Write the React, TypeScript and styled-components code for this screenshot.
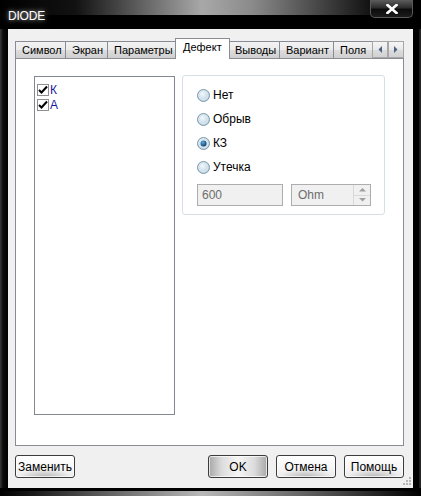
import React from 'react';
import styled, { createGlobalStyle } from 'styled-components';

const GlobalStyle = createGlobalStyle`
  html, body {
    margin: 0;
    padding: 0;
    background: #000;
  }
  body {
    font-family: 'Liberation Sans', Arial, sans-serif;
    font-size: 11px;
    color: #000;
  }
`;

const Window = styled.div`
  width: 421px;
  height: 496px;
  display: flex;
  flex-direction: column;
  background-color: #000;
  background-image: linear-gradient(to right, #000000 0%, #121212 18%, #5e5e5e 33%, #a8a8a8 48%, #8a8a8a 60%, #454545 76%, #121212 88%, #000000 95%);
  background-size: 100% 15px;
  background-repeat: no-repeat;
  background-position: 0 0;
  overflow: hidden;
`;

const TitleBar = styled.div`
  height: 29px;
  flex-shrink: 0;
  display: flex;
  align-items: flex-start;
  justify-content: space-between;
`;

const Title = styled.div`
  margin: 9px 0 0 8px;
  font-size: 12px;
  color: #fff;
  letter-spacing: -0.2px;
  text-shadow: 0 0 4px rgba(255, 255, 255, 0.6), 0 0 8px rgba(255, 255, 255, 0.35);
`;

const CloseButton = styled.div`
  width: 43px;
  height: 18px;
  flex-shrink: 0;
  margin-right: 8px;
  box-sizing: border-box;
  border: 1px solid #5a5a5a;
  border-top: none;
  border-radius: 0 0 5px 5px;
  background: linear-gradient(to bottom, #5d5d5d 0%, #2c2c2c 45%, #0c0c0c 55%, #1c1c1c 100%);
  display: flex;
  align-items: center;
  justify-content: center;
`;

const Body = styled.div`
  flex: 1;
  display: flex;
`;

const SideFrame = styled.div<{ $right?: boolean }>`
  width: 8px;
  flex-shrink: 0;
  background: ${p =>
    p.$right
      ? 'linear-gradient(to right, #000 0%, #000 75%, #3a3a3a 88%, #111 100%)'
      : 'linear-gradient(to right, #3a3a3a 0%, #1a1a1a 25%, #0a0a0a 40%, #000 100%)'};
`;

const Client = styled.div`
  flex: 1;
  background: #f0f0f0;
  display: flex;
  flex-direction: column;
  padding: 9px 9px 0 7px;
  position: relative;
`;

const TabStrip = styled.div`
  height: 21px;
  display: flex;
  align-items: flex-end;
  position: relative;
  z-index: 1;
`;

const TabsViewport = styled.div`
  width: 357px;
  display: flex;
  align-items: flex-end;
  overflow: hidden;
  height: 21px;
`;

const Tab = styled.div<{ $w: number; $active?: boolean }>`
  flex-shrink: 0;
  width: ${p => p.$w}px;
  box-sizing: border-box;
  height: ${p => (p.$active ? 22 : 18)}px;
  margin-bottom: ${p => (p.$active ? -1 : 0)}px;
  margin-left: ${p => (p.$active ? -1 : 0)}px;
  margin-right: ${p => (p.$active ? -1 : 0)}px;
  border: 1px solid #898c95;
  border-bottom: ${p => (p.$active ? 'none' : '1px solid #898c95')};
  border-left-width: ${p => (p.$active ? 1 : 0)}px;
  background: ${p =>
    p.$active ? '#fff' : 'linear-gradient(to bottom, #f2f2f2 0%, #ebebeb 50%, #dddddd 51%, #cfcfcf 100%)'};
  padding: ${p => (p.$active ? '2px 0 0 7px' : '2px 0 0 6px')};
  white-space: nowrap;
  line-height: 13px;
  z-index: ${p => (p.$active ? 2 : 1)};

  &:first-child {
    border-left-width: 1px;
  }
`;

const ScrollPair = styled.div`
  display: flex;
  margin-bottom: 1px;
`;

const ScrollButton = styled.div`
  width: 16px;
  height: 17px;
  box-sizing: border-box;
  border: 1px solid #a7a7a7;
  background: linear-gradient(to bottom, #f6f6f6 0%, #e9e9e9 50%, #dcdcdc 51%, #d2d2d2 100%);
  display: flex;
  align-items: center;
  justify-content: center;
`;

const Panel = styled.div`
  height: 388px;
  box-sizing: border-box;
  border: 1px solid #898c95;
  background: #fff;
  margin-top: -1px;
  display: flex;
  align-items: flex-start;
  padding: 17px 0 0 18px;
  gap: 7px;
`;

const ListBox = styled.div`
  width: 141px;
  height: 339px;
  box-sizing: border-box;
  border: 1px solid #828790;
  padding: 5px 0 0 2px;
`;

const ListItem = styled.div`
  height: 15px;
  display: flex;
  align-items: center;
  gap: 1px;
`;

const CheckBox = styled.div`
  width: 12px;
  height: 12px;
  box-sizing: border-box;
  border: 1px solid #8f8f8f;
  background: #fff;
  display: flex;
  align-items: center;
  justify-content: center;
`;

const ItemLabel = styled.span`
  color: #1a1aa0;
  font-size: 12px;
  line-height: 14px;
`;

const GroupBox = styled.div`
  width: 203px;
  height: 140px;
  box-sizing: border-box;
  border: 1px solid #d5dfe5;
  border-radius: 3px;
  margin-top: -1px;
  padding: 13px 0 0 14px;
  display: flex;
  flex-direction: column;
`;

const RadioRow = styled.div`
  height: 24px;
  display: flex;
  align-items: flex-start;
  gap: 3px;
`;

const RadioText = styled.span`
  font-size: 12px;
  line-height: 13px;
`;

const FieldRow = styled.div`
  display: flex;
  gap: 8px;
  margin-top: -1px;
`;

const EditBox = styled.div`
  width: 86px;
  height: 22px;
  box-sizing: border-box;
  border: 1px solid #adadad;
  background: #f0f0f0;
  color: #6d6d6d;
  padding: 3px 0 0 4px;
  font-size: 12px;
`;

const ComboBox = styled.div`
  width: 80px;
  height: 22px;
  box-sizing: border-box;
  border: 1px solid #adadad;
  background: #f0f0f0;
  display: flex;
  justify-content: space-between;
`;

const ComboText = styled.span`
  color: #6d6d6d;
  padding: 3px 0 0 6px;
  font-size: 12px;
`;

const Spinner = styled.div`
  width: 16px;
  display: flex;
  flex-direction: column;
  border-left: 1px solid #d9d9d9;
`;

const SpinHalf = styled.div`
  flex: 1;
  display: flex;
  align-items: center;
  justify-content: center;
  & + & {
    border-top: 1px solid #d9d9d9;
  }
`;

const ButtonRow = styled.div`
  display: flex;
  align-items: center;
  margin-top: 9px;
  gap: 8px;
`;

const Spacer = styled.div`
  flex: 1;
`;

const Button = styled.div<{ $default?: boolean }>`
  width: 60px;
  height: 23px;
  box-sizing: border-box;
  border: 1px solid #3c3c3c;
  border-radius: 3px;
  display: flex;
  align-items: center;
  justify-content: center;
  font-size: 12px;
  background: ${p =>
    p.$default
      ? 'linear-gradient(to right, #a8a8a8 0%, #dcdcdc 22%, #f6f6f6 50%, #dcdcdc 78%, #a8a8a8 100%)'
      : 'radial-gradient(ellipse 26px 8px at 50% 100%, #b8b8b8 0%, rgba(255,255,255,0) 100%), linear-gradient(to bottom, #ffffff 0%, #f7f7f7 50%, #ececec 100%)'};
  box-shadow: inset 0 0 0 1px rgba(255, 255, 255, 0.7);
`;

const Grip = styled.div`
  position: absolute;
  right: 2px;
  bottom: 1px;
`;

const BottomFrame = styled.div`
  height: 8px;
  flex-shrink: 0;
  background: #000;
  display: flex;
  flex-direction: column;
  justify-content: flex-end;
`;

const BottomGlow = styled.div`
  height: 5px;
  background: linear-gradient(to right, #000 0%, #1a1a1a 8%, #6a6a6a 28%, #b8b8b8 48%, #6a6a6a 70%, #1a1a1a 92%, #000 100%);
`;

const CheckMark = () => (
  <svg width="10" height="10" viewBox="0 0 10 10">
    <path d="M1 5 L3.5 7.5 L9 1.5" fill="none" stroke="#000" strokeWidth="2" />
  </svg>
);

const Radio: React.FC<{ checked?: boolean }> = ({ checked }) => (
  <svg width="13" height="13" viewBox="0 0 13 13">
    <defs>
      <radialGradient id={checked ? 'rOn' : 'rOff'} cx="0.4" cy="0.35" r="0.7">
        <stop offset="0" stopColor="#f4f9fc" />
        <stop offset="1" stopColor="#b8d0de" />
      </radialGradient>
      <radialGradient id="dot" cx="0.4" cy="0.35" r="0.7">
        <stop offset="0" stopColor="#5aa8e0" />
        <stop offset="1" stopColor="#0b3a66" />
      </radialGradient>
    </defs>
    <circle cx="6.5" cy="6.5" r="6" fill={`url(#${checked ? 'rOn' : 'rOff'})`} stroke="#7a98ab" strokeWidth="1" />
    <circle cx="6.5" cy="6.5" r="4.2" fill="none" stroke="#d9e6ee" strokeWidth="1" />
    {checked && <circle cx="6.5" cy="6.5" r="3" fill="url(#dot)" />}
  </svg>
);

const Arrow: React.FC<{ dir: 'left' | 'right' | 'up' | 'down'; color?: string }> = ({ dir, color = '#4d6185' }) => {
  const d = {
    left: 'M4 0 L4 7 L0.5 3.5 Z',
    right: 'M0 0 L0 7 L3.5 3.5 Z',
    up: 'M0 3.5 L7 3.5 L3.5 0 Z',
    down: 'M0 0 L7 0 L3.5 3.5 Z',
  }[dir];
  const w = dir === 'left' || dir === 'right' ? 4 : 7;
  const h = dir === 'left' || dir === 'right' ? 7 : 4;
  return (
    <svg width={w} height={h} viewBox={`0 0 ${w} ${h}`}>
      <path d={d} fill={color} />
    </svg>
  );
};

const tabs = [
  { label: 'Символ', w: 51 },
  { label: 'Экран', w: 42 },
  { label: 'Параметры', w: 68 },
  { label: 'Дефект', w: 55, active: true },
  { label: 'Выводы', w: 51 },
  { label: 'Вариант', w: 54 },
  { label: 'Поля', w: 60 },
];

const radios = [
  { label: 'Нет' },
  { label: 'Обрыв' },
  { label: 'КЗ', checked: true },
  { label: 'Утечка' },
];

const App: React.FC = () => (
  <>
    <GlobalStyle />
    <Window>
      <TitleBar>
        <Title>DIODE</Title>
        <CloseButton>
          <svg width="12" height="10" viewBox="0 0 12 10">
            <path d="M1.5 1 L10.5 9 M10.5 1 L1.5 9" stroke="#fff" strokeWidth="2.6" strokeLinecap="square" />
          </svg>
        </CloseButton>
      </TitleBar>
      <Body>
        <SideFrame />
        <Client>
          <TabStrip>
            <TabsViewport>
              {tabs.map(t => (
                <Tab key={t.label} $w={t.w} $active={t.active}>
                  {t.label}
                </Tab>
              ))}
            </TabsViewport>
            <ScrollPair>
              <ScrollButton>
                <Arrow dir="left" />
              </ScrollButton>
              <ScrollButton>
                <Arrow dir="right" />
              </ScrollButton>
            </ScrollPair>
          </TabStrip>
          <Panel>
            <ListBox>
              <ListItem>
                <CheckBox>
                  <CheckMark />
                </CheckBox>
                <ItemLabel>К</ItemLabel>
              </ListItem>
              <ListItem>
                <CheckBox>
                  <CheckMark />
                </CheckBox>
                <ItemLabel>А</ItemLabel>
              </ListItem>
            </ListBox>
            <GroupBox>
              {radios.map(r => (
                <RadioRow key={r.label}>
                  <Radio checked={r.checked} />
                  <RadioText>{r.label}</RadioText>
                </RadioRow>
              ))}
              <FieldRow>
                <EditBox>600</EditBox>
                <ComboBox>
                  <ComboText>Ohm</ComboText>
                  <Spinner>
                    <SpinHalf>
                      <Arrow dir="up" color="#a0a0a0" />
                    </SpinHalf>
                    <SpinHalf>
                      <Arrow dir="down" color="#a0a0a0" />
                    </SpinHalf>
                  </Spinner>
                </ComboBox>
              </FieldRow>
            </GroupBox>
          </Panel>
          <ButtonRow>
            <Button>Заменить</Button>
            <Spacer />
            <Button $default>OK</Button>
            <Button>Отмена</Button>
            <Button>Помощь</Button>
          </ButtonRow>
          <Grip>
            <svg width="8" height="8" viewBox="0 0 8 8">
              <rect x="6" y="0" width="2" height="2" fill="#b5b5b5" />
              <rect x="3" y="3" width="2" height="2" fill="#b5b5b5" />
              <rect x="6" y="3" width="2" height="2" fill="#b5b5b5" />
              <rect x="0" y="6" width="2" height="2" fill="#b5b5b5" />
              <rect x="3" y="6" width="2" height="2" fill="#b5b5b5" />
              <rect x="6" y="6" width="2" height="2" fill="#b5b5b5" />
            </svg>
          </Grip>
        </Client>
        <SideFrame $right />
      </Body>
      <BottomFrame>
        <BottomGlow />
      </BottomFrame>
    </Window>
  </>
);

export default App;
